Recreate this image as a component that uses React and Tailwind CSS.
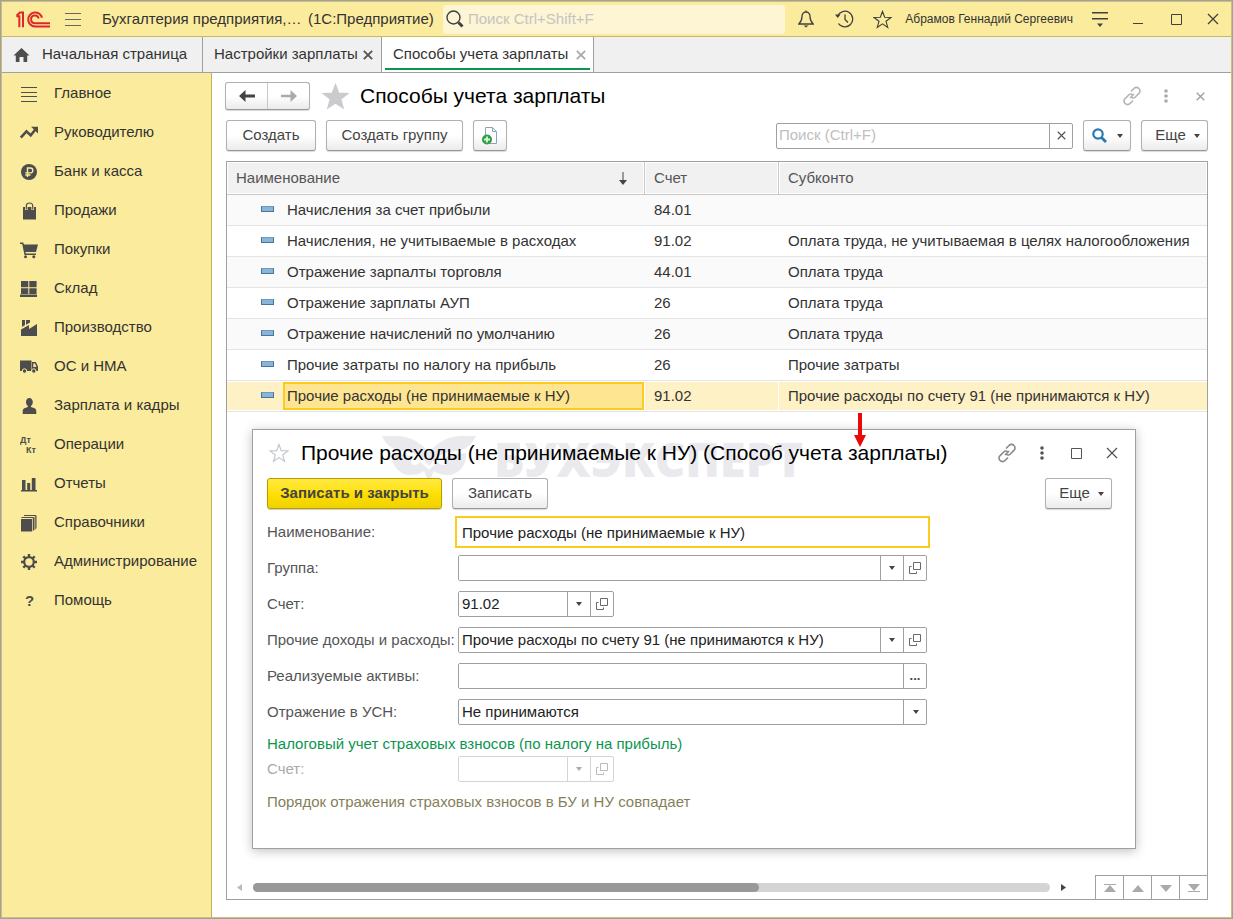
import React, { useState } from 'react';
import clsx from 'clsx';

const menu = [
  { id: 'main', label: 'Главное' },
  { id: 'manager', label: 'Руководителю' },
  { id: 'bank', label: 'Банк и касса' },
  { id: 'sales', label: 'Продажи' },
  { id: 'purchases', label: 'Покупки' },
  { id: 'stock', label: 'Склад' },
  { id: 'production', label: 'Производство' },
  { id: 'assets', label: 'ОС и НМА' },
  { id: 'salary', label: 'Зарплата и кадры' },
  { id: 'operations', label: 'Операции' },
  { id: 'reports', label: 'Отчеты' },
  { id: 'catalogs', label: 'Справочники' },
  { id: 'admin', label: 'Администрирование' },
  { id: 'help', label: 'Помощь' },
];

const rows = [
  { name: 'Начисления за счет прибыли', account: '84.01', sub: '' },
  { name: 'Начисления, не учитываемые в расходах', account: '91.02', sub: 'Оплата труда, не учитываемая в целях налогообложения' },
  { name: 'Отражение зарпалты торговля', account: '44.01', sub: 'Оплата труда' },
  { name: 'Отражение зарплаты АУП', account: '26', sub: 'Оплата труда' },
  { name: 'Отражение начислений по умолчанию', account: '26', sub: 'Оплата труда' },
  { name: 'Прочие затраты по налогу на прибыль', account: '26', sub: 'Прочие затраты' },
  { name: 'Прочие расходы (не принимаемые к НУ)', account: '91.02', sub: 'Прочие расходы по счету 91 (не принимаются к НУ)' },
];

const menuIcons = {
  main: <path d="M1 2.5h16M1 7.5h16M1 11.5h16M1 16.5h16" stroke="currentColor" strokeWidth="1" fill="none" />,
  manager: (
    <>
      <path d="M.8 13.6 6.5 7.4l4.2 4L15 6" stroke="currentColor" strokeWidth="2.5" fill="none" />
      <path d="M11 2.8h7v6.6z" />
    </>
  ),
  bank: (
    <>
      <circle cx="9" cy="9" r="8" />
      <path d="M7.5 14V5h2.9a2.4 2.4 0 0 1 0 4.9H5.3M5.3 12h5.2" stroke="#fbeb9c" strokeWidth="1.4" fill="none" />
    </>
  ),
  sales: (
    <>
      <path d="M3 5h13v12.5H3z" />
      <path d="M6.3 8V4.2C6.3 1.9 7.6 1 9.5 1s3.2.9 3.2 3.2V8" stroke="#fbeb9c" strokeWidth="2.6" fill="none" />
      <path d="M6.3 7.5V4C6.3 1.9 7.6 1 9.5 1s3.2.9 3.2 3v3.5" stroke="currentColor" strokeWidth="1.2" fill="none" />
    </>
  ),
  purchases: (
    <>
      <path d="M0 1.5h3.2L4 3.5h14L16 11H5.5l.3 1.5H16V14H4.5L2.2 3H0z" />
      <circle cx="5.5" cy="15.7" r="1.5" />
      <circle cx="13.8" cy="15.7" r="1.5" />
    </>
  ),
  stock: <path d="M1 1h7.300v6.300H1zM9.300 1h7.300v6.300H9.300zM1 8.300h7.300V14H1zM9.300 8.300h7.300V14H9.300zM0 14.500h17V17H0z" />,
  production: <path d="M1 17v-6.5L9 6v4l8-5v12zM2 1h3v5L2 8zM6 1h4v2.5L6 5.7z" />,
  assets: (
    <>
      <path d="M0 2.500h11.500V13H0zM12 4h3.800L18 8.500V13h-6z" />
      <path d="M13.300 5.500h1.700L16.500 9h-3.200z" fill="#fbeb9c" />
      <circle cx="4.500" cy="13" r="2.200" stroke="#fbeb9c" />
      <circle cx="13.800" cy="13" r="2.200" stroke="#fbeb9c" />
    </>
  ),
  salary: <path d="M9.3 1c2.200 0 3.500 1.700 3.500 4 0 1.800-.8 3.300-1.800 4v1l3.600 1.300c1.200.5 1.700 1.600 1.700 3V17H2.700v-2.700c0-1.400.5-2.500 1.700-3L7.800 10V9C6.800 8.300 6 6.800 6 5c0-2.300 1.200-4 3.300-4z" />,
  operations: (
    <g className="text-[9px] font-bold">
      <text x="0" y="7">Дт</text>
      <text x="6" y="17">Кт</text>
    </g>
  ),
  reports: <path d="M1 15h16v1.500H1zM2 5h3.500v10H2zM7.200 8h3v7h-3zM11.800 3h3.700v12h-3.700z" />,
  catalogs: (
    <>
      <path d="M1 5h11v12.500H1z" />
      <path d="M1.500 3.500h12V16M4 1.500h12v13" stroke="currentColor" strokeWidth="1" fill="none" />
      <path d="M12.500 4.500 16 1.500V15l-3.500 2.500z" opacity=".5" />
    </>
  ),
  admin: (
    <>
      <circle cx="9" cy="9" r="4.800" stroke="currentColor" strokeWidth="2.200" fill="none" />
      <path d="M9 1v3M9 14v3M1 9h3M14 9h3M3.300 3.300l2.200 2.200M12.500 12.500l2.200 2.200M3.300 14.700l2.200-2.200M12.500 5.500l2.200-2.200" stroke="currentColor" strokeWidth="2.400" />
    </>
  ),
  help: <text x="5" y="14" className="text-[15px] font-bold">?</text>,
};

function Logo() {
  return (
    <svg width="34" height="17" viewBox="0 0 102 50" fill="none" stroke="#e0252b" strokeWidth="6">
      <path d="M1 15h9V48M2 13 12 4h9V48" />
      <path d="M78 20A21 21 0 1 0 57 46H102" />
      <path d="M68 22A11.500 11.500 0 1 0 57 36H102" />
    </svg>
  );
}

function CloseIcon({ size = 12, width = 1.3 }) {
  return (
    <svg width={size} height={size} viewBox="0 0 12 12" fill="none" stroke="currentColor" strokeWidth={width}>
      <path d="M1 1l10 10M11 1 1 11" />
    </svg>
  );
}

function Star({ size, filled }) {
  return (
    <svg width={size} height={size} viewBox="0 0 20 20" fill={filled ? 'currentColor' : 'none'} stroke="currentColor" strokeWidth="1.2">
      <path d="M10 1.5l2.3 6.100 6.600.3-5.200 4 1.800 6.400L10 14.600l-5.500 3.700 1.800-6.400-5.200-4 6.600-.3z" />
    </svg>
  );
}

function LinkIcon() {
  return (
    <svg width="20" height="20" viewBox="0 0 20 20" fill="none" stroke="currentColor" strokeWidth="1.6">
      <path d="M9 5.500l3-3a3.300 3.300 0 0 1 4.900 0 3.300 3.300 0 0 1 0 4.900l-3.600 3.600a3.300 3.300 0 0 1-4 .4" />
      <path d="M11 14.500l-3 3a3.300 3.300 0 0 1-4.900 0 3.300 3.300 0 0 1 0-4.900L6.700 9a3.300 3.300 0 0 1 4-.4" />
      <path d="M8 12l4-4" />
    </svg>
  );
}

function Dots() {
  return (
    <svg width="6" height="14" viewBox="0 0 6 14" fill="currentColor">
      <circle cx="3" cy="2" r="1.800" />
      <circle cx="3" cy="7" r="1.800" />
      <circle cx="3" cy="12" r="1.800" />
    </svg>
  );
}

function SquareIcon() {
  return (
    <svg width="11" height="11" viewBox="0 0 11 11" fill="none" stroke="currentColor">
      <path d="M.5.5h10v10H.5z" />
    </svg>
  );
}

function Caret() {
  return (
    <svg width="6" height="4" viewBox="0 0 6 4" fill="currentColor">
      <path d="M0 0h6L3 4z" />
    </svg>
  );
}

function OpenIcon() {
  return (
    <svg width="12" height="12" viewBox="0 0 12 12" fill="none" stroke="currentColor" opacity=".8">
      <path d="M4.500.5h7v7h-7zM2.500 4.500h-2v7h7v-2" />
    </svg>
  );
}

function IconButton({ label, className, children }) {
  return (
    <button type="button" aria-label={label} className={clsx('flex h-7 shrink-0 items-center justify-center', className)}>
      {children}
    </button>
  );
}

function Button({ className, children, ...props }) {
  return (
    <button
      type="button"
      className={clsx(
        'flex h-[31px] shrink-0 items-center justify-center rounded-[3px] border border-[#b0b0b0] border-b-[#989898] bg-linear-to-b from-white from-50% to-[#ebebeb] text-[#444] shadow-[0_1px_1px_rgba(0,0,0,0.15)]',
        className
      )}
      {...props}
    >
      {children}
    </button>
  );
}

function TitleBar() {
  return (
    <header className="flex h-[35px] shrink-0 items-center border-b border-[#c9b962] bg-[#fbeb9c] text-[#404040]">
      <div className="ml-3.5 shrink-0"><Logo /></div>
      <IconButton label="Меню" className="ml-[9px] w-7 text-[#666]">
        <svg width="16" height="13" viewBox="0 0 16 13" stroke="currentColor"><path d="M0 .5h16M0 6.500h16M0 12.500h16" /></svg>
      </IconButton>
      <span className="ml-[15px] w-[206px] shrink-0 whitespace-nowrap text-[15px] text-[#333]">Бухгалтерия предприятия,…</span>
      <span className="w-[135px] shrink-0 whitespace-nowrap text-[15px] text-[#333]">(1С:Предприятие)</span>
      <label className="flex h-[29px] min-w-0 flex-1 items-center gap-1 rounded-[3px] bg-[#fdf5d3] pl-[3px]">
        <svg width="18" height="18" viewBox="0 0 18 18" fill="none" stroke="currentColor" className="shrink-0">
          <circle cx="7.500" cy="7.500" r="6.500" strokeWidth="1.400" />
          <path d="M12.500 12.500l4 4" strokeWidth="3" />
        </svg>
        <input type="search" aria-label="Поиск" placeholder="Поиск Ctrl+Shift+F" className="min-w-0 flex-1 bg-transparent text-[15px] outline-none placeholder:text-[#c4c4c4]" />
      </label>
      <IconButton label="Уведомления" className="ml-0.5 w-[38px]">
        <svg width="16" height="18" viewBox="0 0 16 18" fill="none" stroke="currentColor" strokeWidth="1.3">
          <path d="M8 2c-2.800 0-4 2-4 4.500 0 3.700-1.200 5.500-3.200 7.500h14.400c-2-2-3.200-3.800-3.200-7.500C12 4 10.800 2 8 2zM8 .5V2" />
          <path d="M5.500 15.500h5L8 17.500z" fill="currentColor" stroke="none" />
        </svg>
      </IconButton>
      <IconButton label="История" className="w-[38px]">
        <svg width="19" height="18" viewBox="0 0 19 18" fill="none" stroke="currentColor" strokeWidth="1.3">
          <path d="M2.700 6A7.800 7.800 0 1 1 3.500 13.500M10 4.500v5l3 3" />
          <path d="M0 4.500h5.500L2.700 8z" fill="currentColor" stroke="none" />
        </svg>
      </IconButton>
      <IconButton label="Избранное" className="w-[38px]"><Star size={19} /></IconButton>
      <span className="mr-2 ml-1 shrink-0 whitespace-nowrap text-xs text-[#333]">Абрамов Геннадий Сергеевич</span>
      <IconButton label="Настройки" className="w-[38px]">
        <svg width="16" height="15" viewBox="0 0 16 15" fill="currentColor"><path d="M0 0h16v1.500H0zM0 6h16v1.500H0zM5 11.500h6L8 15z" /></svg>
      </IconButton>
      <IconButton label="Свернуть" className="w-[38px]">
        <svg width="10" height="12" viewBox="0 0 10 12" stroke="currentColor"><path d="M0 10.500h10" /></svg>
      </IconButton>
      <IconButton label="Развернуть" className="w-[38px]"><SquareIcon /></IconButton>
      <IconButton label="Закрыть" className="w-9"><CloseIcon /></IconButton>
    </header>
  );
}

function Tabs() {
  return (
    <nav className="flex h-9 shrink-0 border-b border-[#a0a0a0] bg-[#f0f0f0] text-[15px] text-[#333]">
      <button type="button" className="flex w-[201px] items-center gap-3 border-r border-[#a0a0a0] pl-[11px]">
        <svg width="17" height="14" viewBox="0 0 16 14" fill="#4d4d4d"><path d="M8 0 16 7.500h-2.300V14H10V9H6v5H2.300V7.500H0z" /></svg>
        Начальная страница
      </button>
      <div className="flex w-[179px] items-center justify-between border-r border-[#a0a0a0] pr-2 pl-[11px]">
        <button type="button" className="whitespace-nowrap">Настройки зарплаты</button>
        <button type="button" aria-label="Закрыть вкладку" className="text-[#555]"><CloseIcon size={10} width={2.2} /></button>
      </div>
      <div className="w-[212px] border-r border-[#a0a0a0] bg-white px-[3px] pb-0.5">
        <div className="flex h-full items-center justify-between pt-0.5 pr-1 pl-2 shadow-[inset_0_-2px_0_#0b9550]">
          <button type="button" className="whitespace-nowrap">Способы учета зарплаты</button>
          <button type="button" aria-label="Закрыть вкладку" className="text-[#aaa]"><CloseIcon size={10} width={2.2} /></button>
        </div>
      </div>
    </nav>
  );
}

function Sidebar() {
  return (
    <aside className="w-[210px] shrink-0 border-r border-[#bdb35f] bg-[#fbeb9c] pt-px">
      {menu.map((item) => (
        <button key={item.id} type="button" className="flex h-[39px] w-full items-center gap-4 pl-[18px] text-left text-[15px] whitespace-nowrap text-[#333]">
          <svg width="18" height="18" viewBox="0 0 18 18" fill="currentColor" className="shrink-0 text-[#4d4d4d]">{menuIcons[item.id]}</svg>
          {item.label}
        </button>
      ))}
    </aside>
  );
}

function ListTable() {
  const [selected, setSelected] = useState(6);

  return (
    <table className="w-full table-fixed border-separate border-spacing-0 text-left text-[15px] text-[#333]">
      <colgroup>
        <col className="w-[418px]" />
        <col className="w-[134px]" />
        <col />
      </colgroup>
      <thead className="text-[#555]">
        <tr>
          <th className="border-r border-b border-[#c8c8c8] p-px font-normal">
            <div className="flex h-[30px] items-center justify-between bg-[#f1f1f1] pr-4 pl-2">
              Наименование
              <svg width="8" height="13" viewBox="0 0 8 13" fill="#444"><path d="M3.500 0h1v9h-1zM0 8h8l-4 5z" /></svg>
            </div>
          </th>
          <th className="border-r border-b border-[#c8c8c8] p-px font-normal">
            <div className="flex h-[30px] items-center bg-[#f1f1f1] pl-2">Счет</div>
          </th>
          <th className="border-b border-[#c8c8c8] p-px font-normal">
            <div className="flex h-[30px] items-center bg-[#f1f1f1] pl-2">Субконто</div>
          </th>
        </tr>
      </thead>
      <tbody>
        {rows.map((row, i) => {
          const active = i === selected;
          const cell = clsx('flex h-7 items-center whitespace-nowrap', active && 'bg-[#fef1c5]');
          const td = clsx('border-b border-[#e4e4e4] py-px', !active && i % 2 === 0 && 'bg-[#fafafa]');
          return (
            <tr key={row.name} onClick={() => setSelected(i)}>
              <td className={clsx(td, 'pr-px')}>
                <div className={cell}>
                  <span className="mb-0.5 ml-[34px] h-1.5 w-[13px] shrink-0 border border-[#47749a] border-t-[#6d9ac0] bg-[#8ab4d8]" />
                  <span className={clsx('ml-[9px] flex h-7 flex-1 items-center border-2 pl-0.5', active ? 'border-[#fbcb20] bg-[#fee591]' : 'border-transparent')}>
                    {row.name}
                  </span>
                </div>
              </td>
              <td className={clsx(td, 'pr-px')}><div className={clsx(cell, 'pl-[9px]')}>{row.account}</div></td>
              <td className={td}><div className={clsx(cell, 'pl-[9px]')}>{row.sub}</div></td>
            </tr>
          );
        })}
      </tbody>
    </table>
  );
}

// Text box with the small buttons attached on the right
function Field({ id, value = '', actions = [], short, disabled }) {
  return (
    <div className={clsx('flex h-[26px] overflow-hidden rounded-[2px] border', short ? 'w-[156px]' : 'w-full', disabled ? 'border-[#d4d4d4] text-[#aaa]' : 'border-[#a0a0a0] text-[#444]')}>
      <input id={id} defaultValue={value} disabled={disabled} className="min-w-0 flex-1 bg-white pl-[3px] text-[15px] text-[#222] outline-none" />
      {actions.map((a) => (
        <button key={a} type="button" disabled={disabled} aria-label={a === 'open' ? 'Открыть' : 'Выбрать'} className={clsx('flex w-[23px] shrink-0 items-center justify-center border-l', disabled ? 'border-[#d4d4d4]' : 'border-[#a0a0a0]')}>
          {a === 'drop' && <Caret />}
          {a === 'open' && <OpenIcon />}
          {a === 'more' && <span className="text-[13px] font-bold">...</span>}
        </button>
      ))}
    </div>
  );
}

function Owl() {
  return (
    <svg width="94" height="48" viewBox="0 0 94 48" fill="#e9e9ee" className="shrink-0">
      <path d="M0 1h14c10 0 18 3 24 8 4 3 6 6 9 6s5-3 9-6c6-5 14-8 24-8h14c-4 9-11 14-20 15-10 1-17 3-22 9l-5 6-5-6c-5-6-12-8-22-9C11 15 4 10 0 1z" />
      <path d="M10 18c9 1 17 2 22 5-4 1-4 6 0 7 3 0 5-1 6-3 3 2 6 5 9 8 3-3 6-6 9-8 1 2 3 3 6 3 4-1 4-6 0-7 5-3 13-4 22-5 1 11-6 21-17 22-6 0-11-1-15-4l-5 11-5-11c-4 3-9 4-15 4C16 39 9 29 10 18z" />
    </svg>
  );
}

function ItemDialog() {
  const label = 'text-[15px] whitespace-nowrap text-[#555]';

  return (
    <section aria-label="Способ учета зарплаты" className="absolute top-[267px] right-[71px] left-[25px] border border-[#a0a0a0] bg-white pb-[35px] shadow-[0_2px_10px_rgba(0,0,0,0.25)]">
      <div className="pointer-events-none absolute top-[5px] left-[129px] flex items-center gap-[18px]" aria-hidden="true">
        <Owl />
        <span className="font-['Open_Sans',sans-serif] text-[47px] leading-[48px] font-extrabold text-[#e9e9ee]">БУХЭКСПЕРТ</span>
      </div>

      <div className="relative flex h-[46px] items-center pr-1.5 pl-4 text-[#555]">
        <button type="button" aria-label="В избранное" className="text-[#c4c8cc]"><Star size={20} /></button>
        <h2 className="ml-3 flex-1 text-[21px] whitespace-nowrap text-black">Прочие расходы (не принимаемые к НУ) (Способ учета зарплаты)</h2>
        <IconButton label="Ссылка" className="w-[35px] text-[#888]"><LinkIcon /></IconButton>
        <IconButton label="Ещё" className="w-[35px]"><Dots /></IconButton>
        <IconButton label="Развернуть" className="w-[35px]"><SquareIcon /></IconButton>
        <IconButton label="Закрыть" className="w-[35px]"><CloseIcon /></IconButton>
      </div>
      <svg width="12" height="34" viewBox="0 0 12 34" fill="#e60a0a" className="absolute -top-[17px] left-[601px]">
        <path d="M4 0h4v22h4L6 34 0 22h4z" />
      </svg>

      <div className="relative mt-0.5 flex gap-2.5 pr-[23px] pl-3.5 text-[15px]">
        <button type="button" className="h-[31px] w-[175px] rounded-[3px] border border-[#b79c00] bg-linear-to-b from-[#ffe93c] via-[#ffe000] to-[#efd100] font-bold text-[#444] shadow-[0_1px_1px_rgba(0,0,0,0.2)]">
          Записать и закрыть
        </button>
        <Button className="w-24">Записать</Button>
        <Button className="ml-auto w-[67px] gap-2 pl-1.5">Еще <Caret /></Button>
      </div>

      <form className="mt-2.5 ml-3.5 grid max-w-[660px] grid-cols-[191px_1fr] items-center gap-y-2.5">
        <label htmlFor="name" className={label}>Наименование:</label>
        <input id="name" defaultValue="Прочие расходы (не принимаемые к НУ)" className="h-[26px] w-full border border-transparent pl-[3px] text-[15px] text-[#222] outline-2 outline-offset-1 outline-[#fbcb20]" />
        <label htmlFor="group" className={label}>Группа:</label>
        <Field id="group" actions={['drop', 'open']} />
        <label htmlFor="account" className={label}>Счет:</label>
        <Field id="account" value="91.02" short actions={['drop', 'open']} />
        <label htmlFor="income" className={label}>Прочие доходы и расходы:</label>
        <Field id="income" value="Прочие расходы по счету 91 (не принимаются к НУ)" actions={['drop', 'open']} />
        <label htmlFor="active" className={label}>Реализуемые активы:</label>
        <Field id="active" actions={['more']} />
        <label htmlFor="usn" className={label}>Отражение в УСН:</label>
        <div className="relative">
          <select id="usn" className="block h-[26px] w-full appearance-none rounded-[2px] border border-[#a0a0a0] bg-white pl-[3px] text-[15px] text-[#222] outline-none">
            <option>Не принимаются</option>
            <option>Принимаются</option>
          </select>
          <span className="pointer-events-none absolute inset-y-0 right-0 flex w-6 items-center justify-center border-l border-[#a0a0a0] text-[#444]"><Caret /></span>
        </div>
      </form>

      <h3 className="mt-2 ml-3.5 text-[15px] leading-[22px] text-[#0b9550]">Налоговый учет страховых взносов (по налогу на прибыль)</h3>
      <div className="mt-px ml-3.5 grid max-w-[660px] grid-cols-[191px_1fr] items-center">
        <label htmlFor="tax-account" className="text-[15px] text-[#aaa]">Счет:</label>
        <Field id="tax-account" short disabled actions={['drop', 'open']} />
      </div>
      <p className="mt-[9px] ml-3.5 text-[15px] leading-[22px] text-[#877f5c]">Порядок отражения страховых взносов в БУ и НУ совпадает</p>
    </section>
  );
}

const pagers = [
  { label: 'В начало', d: 'M0 0h12v1H0zM6 1l6 7H0z' },
  { label: 'Вверх', d: 'M6 1l6 7H0z' },
  { label: 'Вниз', d: 'M0 1h12L6 8z' },
  { label: 'В конец', d: 'M0 0h12L6 7zM0 7h12v1H0z' },
];

function ScrollBar() {
  return (
    <div className="flex h-6 items-center pl-2.5">
      <svg width="5" height="7" viewBox="0 0 5 7" fill="#bbb"><path d="M5 0v7L0 3.500z" /></svg>
      <div className="ml-[11px] h-[9px] flex-1 rounded-full bg-[#d4d4d4]">
        <div className="h-full w-[63.5%] rounded-full bg-[#999]" />
      </div>
      <svg width="5" height="7" viewBox="0 0 5 7" fill="#444" className="mx-[11px]"><path d="M0 0v7l5-3.500z" /></svg>
      <div className="ml-[18px] flex border-t border-[#a0a0a0]">
        {pagers.map((p) => (
          <button key={p.label} type="button" aria-label={p.label} className="flex h-[23px] w-7 items-center justify-center border-l border-[#a0a0a0]">
            <svg width="12" height="8" viewBox="0 0 12 8" fill="#aaa"><path d={p.d} /></svg>
          </button>
        ))}
      </div>
    </div>
  );
}

export default function App() {
  return (
    <div className="flex min-h-screen flex-col border border-[#a0a0a0] bg-white font-['Liberation_Sans',Arial,sans-serif]">
      <div className="flex flex-1 flex-col border border-[#c9c07c]">
        <TitleBar />
        <Tabs />
        <div className="flex flex-1">
          <Sidebar />
          <main className="flex min-w-0 flex-1 flex-col pt-[9px] pb-[17px]">
            <div className="flex h-7 items-center pr-3.5 pl-[13px]">
              <div className="flex h-7 w-[85px] shrink-0 overflow-hidden rounded-[3px] border border-[#b0b0b0] border-b-[#989898] bg-linear-to-b from-white from-50% to-[#ebebeb] shadow-[0_1px_1px_rgba(0,0,0,0.15)]">
                <button type="button" aria-label="Назад" className="flex flex-1 items-center justify-center border-r border-[#c8c8c8] text-[#444]">
                  <svg width="16" height="12" viewBox="0 0 16 12" fill="currentColor"><path d="M0 6l6.500-6v4.500H16v3H6.500V12z" /></svg>
                </button>
                <button type="button" aria-label="Вперед" className="flex flex-1 items-center justify-center text-[#aaa]">
                  <svg width="16" height="12" viewBox="0 0 16 12" fill="currentColor"><path d="M16 6 9.500 0v4.800H0v2.400h9.500V12z" /></svg>
                </button>
              </div>
              <button type="button" aria-label="В избранное" className="ml-3 text-[#c9cbce]"><Star size={27} filled /></button>
              <h1 className="ml-[11px] flex-1 text-[21px] whitespace-nowrap text-black">Способы учета зарплаты</h1>
              <IconButton label="Ссылка" className="w-[34px] text-[#b4b4b4]"><LinkIcon /></IconButton>
              <IconButton label="Ещё" className="w-[34px] text-[#aaa]"><Dots /></IconButton>
              <IconButton label="Закрыть" className="w-[34px] text-[#999]"><CloseIcon size={9} width={1.6} /></IconButton>
            </div>

            <div className="mt-2.5 mr-[23px] ml-3.5 flex items-center gap-2.5 text-[15px]">
              <Button className="w-[90px]">Создать</Button>
              <Button className="w-[137px]">Создать группу</Button>
              <Button className="w-[34px]" aria-label="Создать копированием">
                <svg width="16" height="18" viewBox="0 0 16 18">
                  <path d="M3.500.5h7l4 4v12h-11z" fill="#fff" stroke="#8fa3b5" />
                  <path d="M10.500.5v4h4" fill="none" stroke="#8fa3b5" />
                  <circle cx="5" cy="12.500" r="5" fill="#2f9e44" />
                  <path d="M2 12.500h6M5 9.500v6" stroke="#d8f5dc" strokeWidth="1.8" />
                </svg>
              </Button>
              <div className="ml-auto flex h-[26px] w-[297px] rounded-[2px] border border-[#a0a0a0]">
                <input type="search" aria-label="Поиск по списку" placeholder="Поиск (Ctrl+F)" className="min-w-0 flex-1 pl-0.5 outline-none placeholder:text-[#c0c0c0]" />
                <button type="button" aria-label="Очистить" className="flex w-[23px] items-center justify-center border-l border-[#a0a0a0] text-[#555]"><CloseIcon size={9} width={1.6} /></button>
              </div>
              <Button className="w-12 gap-2.5" aria-label="Найти">
                <svg width="15" height="15" viewBox="0 0 15 15" fill="none" stroke="#2a7ab0">
                  <circle cx="6" cy="6" r="4.700" strokeWidth="2.200" />
                  <path d="M9.500 9.500l4.500 4.500" strokeWidth="2.800" />
                </svg>
                <Caret />
              </Button>
              <Button className="w-[67px] gap-2 pl-1.5">Еще <Caret /></Button>
            </div>

            <div className="relative mt-2.5 mr-[23px] ml-3.5 flex flex-1 flex-col border border-[#a0a0a0]">
              <div className="min-h-[713px] flex-1">
                <ListTable />
              </div>
              <ScrollBar />
              <ItemDialog />
            </div>
          </main>
        </div>
      </div>
    </div>
  );
}
